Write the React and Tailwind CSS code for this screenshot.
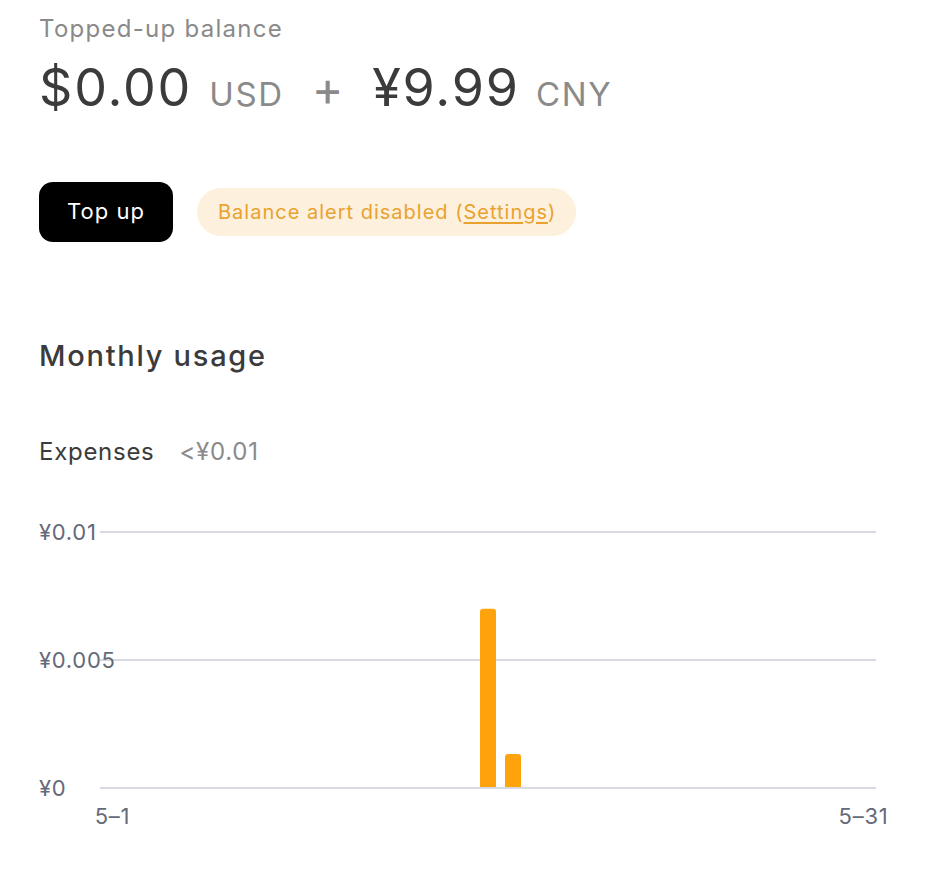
export default function App() {
  const days = 31;
  const left = 100;
  const right = 876;
  const step = (right - left) / days;
  const y0 = 273; // ¥0 line inside svg
  const yTop = 17; // ¥0.01 line
  const scale = (y0 - yTop) / 0.01;
  const data = { 16: 0.007, 17: 0.00133 };

  return (
    <div className="min-h-screen bg-white font-['Inter',sans-serif] tracking-[0.045em]">
      <div className="px-[39px] pt-[14px]">
        <div className="text-[24px] leading-[30px] tracking-[0.053em] text-[#8a8a8a]">Topped-up balance</div>
        <div className="mt-[14px] flex items-baseline">
          <span className="text-[52px] leading-[60px] tracking-[0.035em] text-[#3b3b3b]">$0.00</span>
          <span className="ml-[17px] text-[33px] tracking-[0.05em] text-[#8a8a8a]">USD</span>
          <span className="ml-[28px] text-[48px] leading-[48px] text-[#8a8a8a]">+</span>
          <span className="ml-[28px] text-[52px] leading-[60px] tracking-[0.035em] text-[#3b3b3b]">¥9.99</span>
          <span className="ml-[16px] text-[33px] tracking-[0.05em] text-[#8a8a8a]">CNY</span>
        </div>

        <div className="mt-[62px] flex items-center gap-[24px]">
          <button className="h-[60px] w-[134px] rounded-[14px] bg-black text-[22px] tracking-[0.045em] text-white">
            Top up
          </button>
          <div className="flex h-[48px] items-center rounded-full bg-[#fdf0dc] pl-[21px] pr-[20px] text-[20px] tracking-[0.05em] text-[#e9a230]">
            Balance alert disabled (<span className="underline underline-offset-[3px]">Settings</span>)
          </div>
        </div>

        <h2 className="mt-[96px] text-[29px] leading-[36px] font-medium tracking-[0.06em] text-[#3b3b3b]">Monthly usage</h2>

        <div className="mt-[63px] flex items-center text-[24px] leading-[30px]">
          <span className="text-[#3b3b3b]">Expenses</span>
          <span className="ml-[25px] text-[#8a8a8a]">&lt;¥0.01</span>
        </div>
      </div>

      <svg width="928" height="330" className="mt-[48px] block" style={{ fontFamily: 'Inter, sans-serif', letterSpacing: '0.045em' }}>
        {[0.01, 0.005, 0].map((v) => {
          const y = y0 - v * scale;
          const label = v === 0 ? '¥0' : `¥${v}`;
          return (
            <g key={v}>
              <line x1={left} x2={right} y1={y} y2={y} stroke="#d6d9df" strokeWidth="2" />
              <text x="39" y={y} dominantBaseline="central" fontSize="22" fill="#646a78">
                {label}
              </text>
            </g>
          );
        })}
        {Object.entries(data).map(([d, v]) => {
          const cx = left + (Number(d) - 0.5) * step;
          const h = v * scale;
          return (
            <path
              key={d}
              d={`M${cx - 8} ${y0 - 1} V${y0 - h + 3} Q${cx - 8} ${y0 - h} ${cx - 5} ${y0 - h} H${cx + 5} Q${cx + 8} ${y0 - h} ${cx + 8} ${y0 - h + 3} V${y0 - 1} Z`}
              fill="#ffa30d"
            />
          );
        })}
        <text x={left + 0.5 * step} y="301" textAnchor="middle" dominantBaseline="central" fontSize="22" fill="#646a78">
          5–1
        </text>
        <text x={left + 30.5 * step} y="301" textAnchor="middle" dominantBaseline="central" fontSize="22" fill="#646a78">
          5–31
        </text>
      </svg>
    </div>
  );
}
